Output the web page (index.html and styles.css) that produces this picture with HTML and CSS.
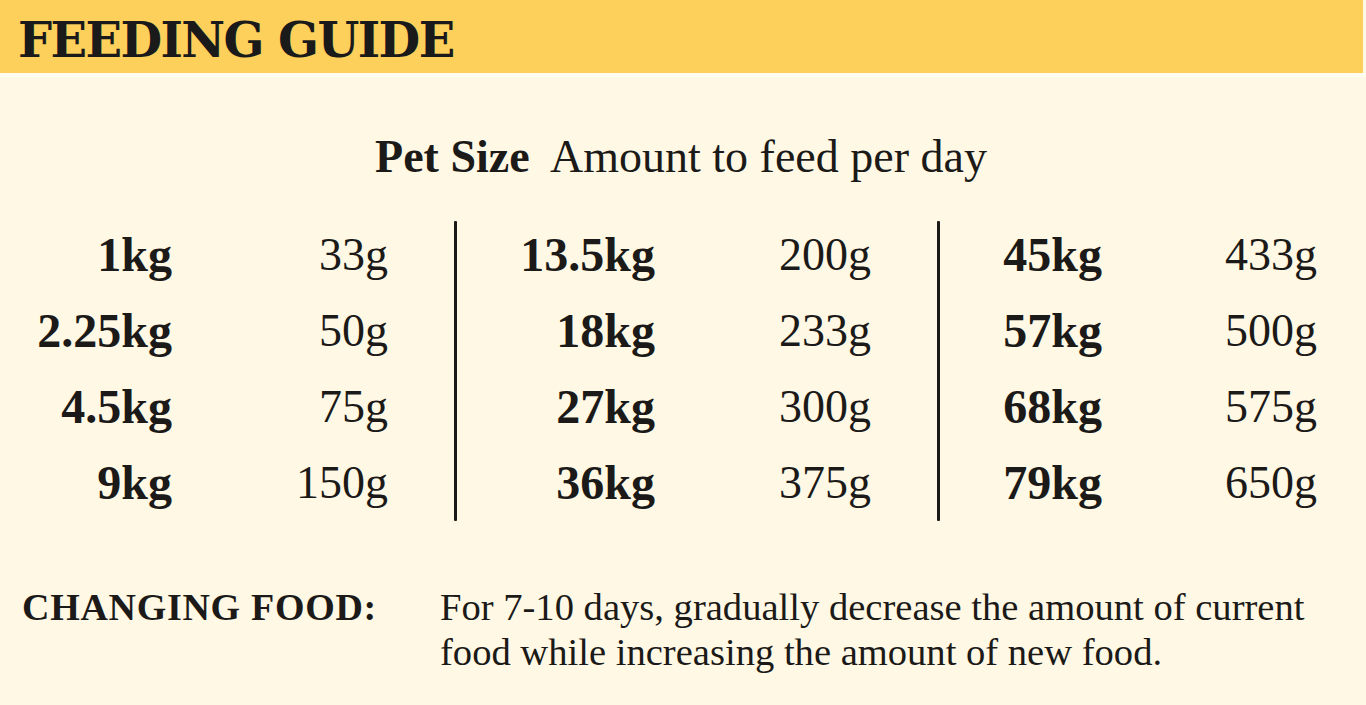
FILE: index.html
```html
<!DOCTYPE html>
<html>
<head>
<meta charset="utf-8">
<link rel="stylesheet" href="styles.css">
</head>
<body>
<div class="page">
  <header class="banner"><h1 class="title">FEEDING GUIDE</h1></header>
  <div class="rule"></div>
  <main class="content">
    <p class="caption"><b>Pet Size</b>&nbsp; Amount to feed per day</p>
    <div class="table">
      <div class="group g1">
        <span class="w">1kg</span><span class="a">33g</span>
        <span class="w">2.25kg</span><span class="a">50g</span>
        <span class="w">4.5kg</span><span class="a">75g</span>
        <span class="w">9kg</span><span class="a">150g</span>
      </div>
      <div class="divider d1"></div>
      <div class="group g2">
        <span class="w">13.5kg</span><span class="a">200g</span>
        <span class="w">18kg</span><span class="a">233g</span>
        <span class="w">27kg</span><span class="a">300g</span>
        <span class="w">36kg</span><span class="a">375g</span>
      </div>
      <div class="divider d2"></div>
      <div class="group g3">
        <span class="w">45kg</span><span class="a">433g</span>
        <span class="w">57kg</span><span class="a">500g</span>
        <span class="w">68kg</span><span class="a">575g</span>
        <span class="w">79kg</span><span class="a">650g</span>
      </div>
    </div>
    <div class="note">
      <div class="note-label">CHANGING FOOD:</div>
      <p class="note-text">For 7-10 days, gradually decrease the amount of current food while increasing the amount of new food.</p>
    </div>
  </main>
</div>
</body>
</html>
```
FILE: styles.css
```css
html, body {
  margin: 0;
  padding: 0;
}
body {
  background: #fff8e4;
  width: 1366px;
  height: 705px;
  overflow: hidden;
  font-family: "Liberation Serif", "Times New Roman", serif;
  color: #1b1a18;
}
.page {
  width: 1366px;
  height: 705px;
  display: flex;
  flex-direction: column;
}
.banner {
  flex: none;
  height: 73px;
  width: 1363px;
  background: #fcd05a;
  display: flex;
  align-items: center;
  padding-left: 18px;
  box-sizing: border-box;
}
.title {
  margin: 0;
  font-family: "DejaVu Serif", serif;
  font-weight: bold;
  font-size: 48px;
  letter-spacing: -1.6px;
  line-height: 1;
  padding-top: 6px;
  color: #1a1a1a;
}
.rule {
  flex: none;
  height: 4px;
  background: #fffcf2;
}
.content {
  flex: 1;
  display: flex;
  flex-direction: column;
  min-height: 0;
}
.caption {
  margin: 54px 0 0 0;
  text-align: center;
  font-size: 46px;
  line-height: 52px;
  padding-right: 4px;
}
.caption b {
  font-weight: bold;
}
.table {
  display: flex;
  margin-top: 38px;
  height: 300px;
  flex: none;
}
.group {
  display: grid;
  grid-auto-rows: 76px;
  align-content: start;
  padding-top: 4px;
  font-size: 46px;
  line-height: 60px;
}
.group span {
  text-align: right;
  white-space: nowrap;
}
.w {
  font-weight: bold;
  font-size: 48px;
}
.g1 {
  grid-template-columns: 172px 216px;
  width: 454px;
}
.g2 {
  grid-template-columns: 198px 216px;
  width: 480px;
}
.g3 {
  grid-template-columns: 162px 215px;
}
.divider {
  width: 3px;
  background: #1b1a18;
  height: 300px;
  border-radius: 1px;
}
.note {
  display: flex;
  margin-top: 64px;
  padding-left: 22px;
}
.note-label {
  width: 418px;
  font-weight: bold;
  font-size: 38px;
  letter-spacing: 0.7px;
  line-height: 45px;
  flex: none;
}
.note-text {
  margin: 0;
  width: 880px;
  font-size: 38.6px;
  line-height: 45px;
}
```
